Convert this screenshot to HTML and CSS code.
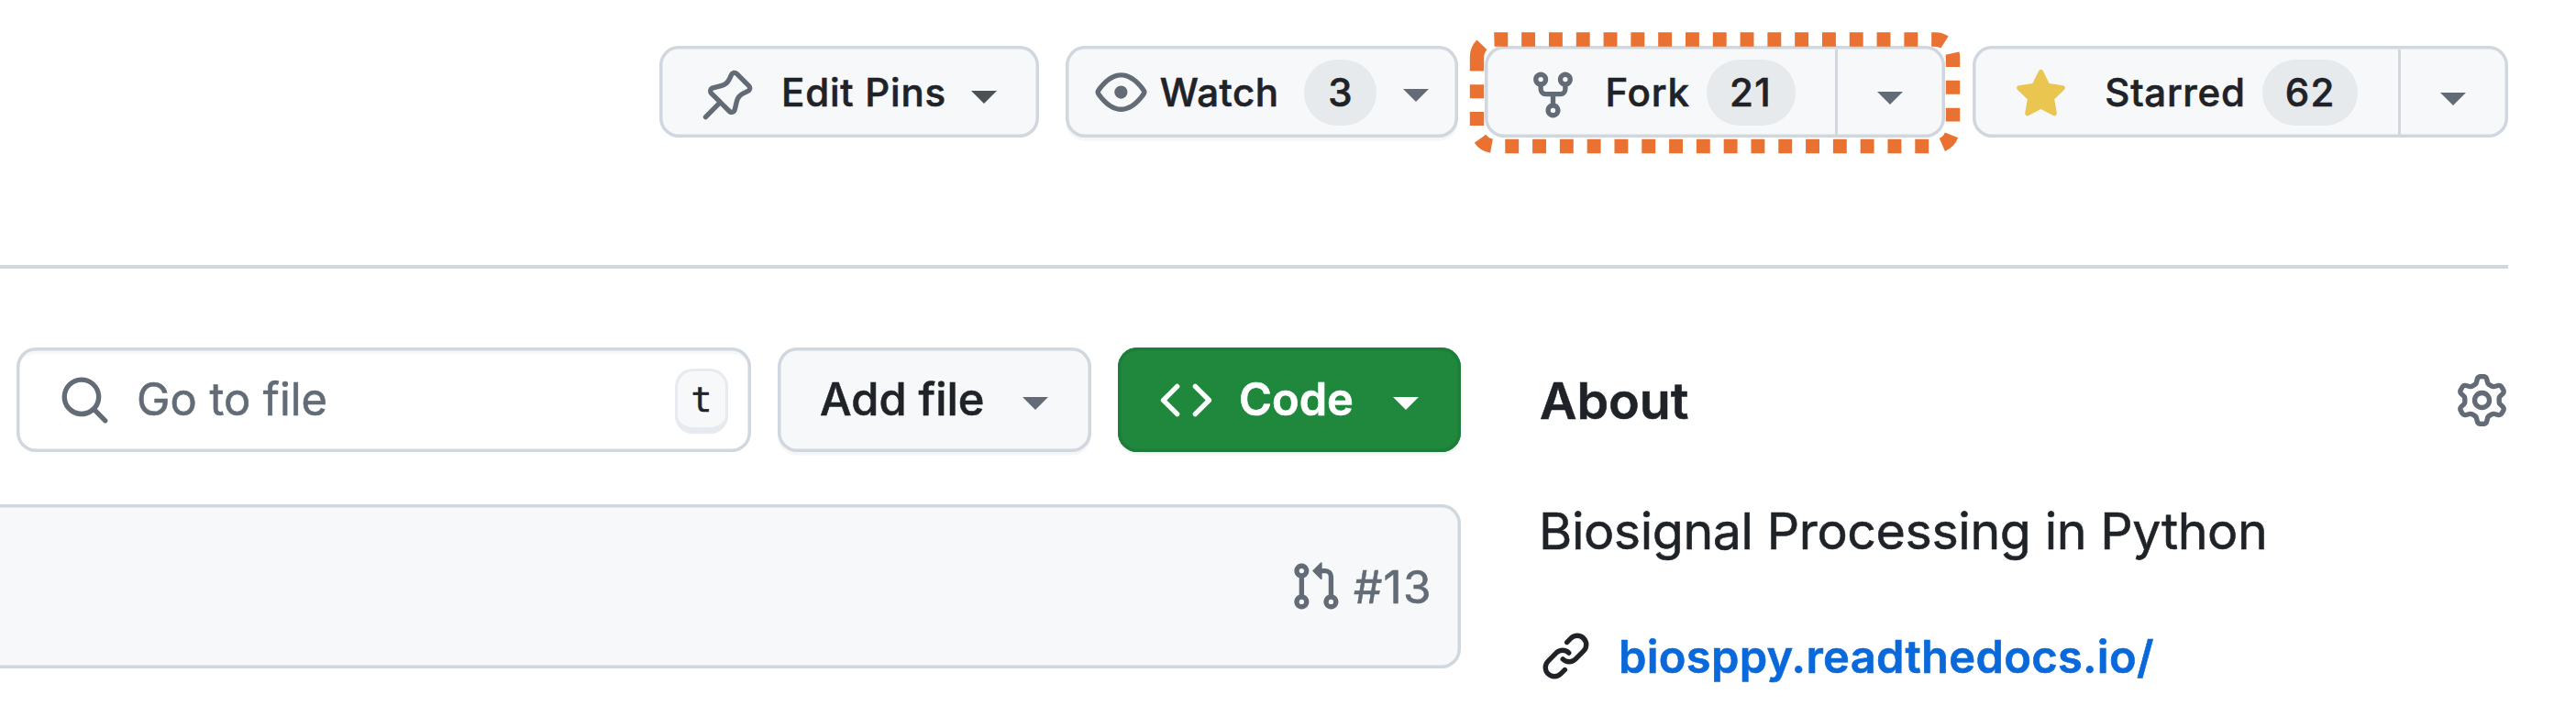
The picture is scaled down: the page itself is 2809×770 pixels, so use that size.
FILE: index.html
```html
<!DOCTYPE html>
<html lang="en">
<head>
<meta charset="utf-8">
<title>Biosignal Processing in Python</title>
<link rel="stylesheet" href="styles.css">
</head>
<body>
<header class="actions">
  <button class="btn pins">
    <svg class="icon low" viewBox="0 0 16 16"><path d="m11.294.984 3.722 3.722a1.75 1.75 0 0 1-.504 2.826l-1.327.613a3.089 3.089 0 0 0-1.707 2.084l-.584 2.454c-.317 1.332-1.972 1.8-2.94.832L5.75 11.311 1.78 15.28a.749.749 0 1 1-1.06-1.06l3.969-3.97-2.204-2.204c-.968-.968-.5-2.623.832-2.94l2.454-.584a3.08 3.08 0 0 0 2.084-1.707l.613-1.327a1.75 1.75 0 0 1 2.826-.504ZM6.283 9.723l2.732 2.731a.25.25 0 0 0 .42-.119l.584-2.454a4.586 4.586 0 0 1 2.537-3.098l1.328-.613a.25.25 0 0 0 .072-.404l-3.722-3.722a.25.25 0 0 0-.404.072l-.613 1.328a4.584 4.584 0 0 1-3.098 2.537l-2.454.584a.25.25 0 0 0-.119.42l2.731 2.732Z"/></svg>
    <span class="label">Edit Pins</span>
    <svg class="caret" viewBox="0 0 28 14"><path d="M0 0h28L14 14z"/></svg>
  </button>
  <button class="btn watch">
    <svg class="icon" viewBox="0 0 16 16"><path d="M8 2c1.981 0 3.671.992 4.933 2.078 1.27 1.091 2.187 2.345 2.637 3.023a1.62 1.62 0 0 1 0 1.798c-.45.678-1.367 1.932-2.637 3.023C11.67 13.008 9.981 14 8 14c-1.981 0-3.671-.992-4.933-2.078C1.797 10.83.88 9.576.43 8.898a1.62 1.62 0 0 1 0-1.798c.45-.677 1.367-1.931 2.637-3.022C4.33 2.992 6.019 2 8 2ZM1.679 7.932a.12.12 0 0 0 0 .136c.411.622 1.241 1.75 2.366 2.717C5.176 11.758 6.527 12.5 8 12.5c1.473 0 2.825-.742 3.955-1.715 1.124-.967 1.954-2.096 2.366-2.717a.12.12 0 0 0 0-.136c-.412-.621-1.242-1.75-2.366-2.717C10.824 4.242 9.473 3.5 8 3.5c-1.473 0-2.825.742-3.955 1.715-1.124.967-1.954 2.096-2.366 2.717ZM8 10a2 2 0 1 1-.001-3.999A2 2 0 0 1 8 10Z"/></svg>
    <span class="label">Watch</span>
    <span class="badge"><span class="label">3</span></span>
    <svg class="caret" viewBox="0 0 28 14"><path d="M0 0h28L14 14z"/></svg>
  </button>
  <div class="btn fork">
    <div class="main">
      <svg class="icon low" viewBox="0 0 16 16"><path d="M5 5.372v.878c0 .414.336.75.75.75h4.5a.75.75 0 0 0 .75-.75v-.878a2.25 2.25 0 1 1 1.5 0v.878a2.25 2.25 0 0 1-2.25 2.25h-1.5v2.128a2.251 2.251 0 1 1-1.5 0V8.5h-1.5A2.25 2.25 0 0 1 3.5 6.25v-.878a2.25 2.25 0 1 1 1.5 0ZM5 3.25a.75.75 0 1 0-1.5 0 .75.75 0 0 0 1.5 0Zm6.75.75a.75.75 0 1 0 0-1.5.75.75 0 0 0 0 1.5Zm-3 8.75a.75.75 0 1 0-1.5 0 .75.75 0 0 0 1.5 0Z"/></svg>
      <span class="label">Fork</span>
      <span class="badge"><span class="label digits">21</span></span>
    </div>
    <div class="more"><svg class="caret" viewBox="0 0 28 14"><path d="M0 0h28L14 14z"/></svg></div>
    <svg class="highlight" viewBox="0 0 536 133"><path pathLength="83" d="M8.5 27.5A19.5 19.5 0 0 1 28 8H508A19.5 19.5 0 0 1 527.5 27.5V105A19.5 19.5 0 0 1 508 124.5H28A19.5 19.5 0 0 1 8.5 105Z"/></svg>
  </div>
  <div class="btn star">
    <div class="main">
      <svg class="icon low" viewBox="0 0 16 16"><path d="M8 .25a.75.75 0 0 1 .673.418l1.882 3.815 4.21.612a.75.75 0 0 1 .416 1.279l-3.046 2.97.719 4.192a.751.751 0 0 1-1.088.791L8 12.347l-3.766 1.98a.75.75 0 0 1-1.088-.79l.72-4.194L.818 6.374a.75.75 0 0 1 .416-1.28l4.21-.611L7.327.668A.75.75 0 0 1 8 .25Z"/></svg>
      <span class="label">Starred</span>
      <span class="badge"><span class="label digits">62</span></span>
    </div>
    <div class="more"><svg class="caret" viewBox="0 0 28 14"><path d="M0 0h28L14 14z"/></svg></div>
  </div>
</header>
<main class="content">
  <section class="files">
    <div class="toolbar">
      <div class="search">
        <svg class="icon" viewBox="0 0 16 16"><path d="M10.68 11.74a6 6 0 0 1-7.922-8.982 6 6 0 0 1 8.982 7.922l3.04 3.04a.749.749 0 0 1-.326 1.275.749.749 0 0 1-.734-.215ZM11.5 7a4.499 4.499 0 1 0-8.997 0A4.499 4.499 0 0 0 11.5 7Z"/></svg>
        <span class="placeholder">Go to file</span>
        <kbd class="key">t</kbd>
      </div>
      <button class="btn add">
        <span>Add file</span>
        <svg class="caret" viewBox="0 0 28 14"><path d="M0 0h28L14 14z"/></svg>
      </button>
      <button class="btn code">
        <svg class="icon" viewBox="0 0 16 16"><path d="m11.28 3.22 4.25 4.25a.75.75 0 0 1 0 1.06l-4.25 4.25a.749.749 0 0 1-1.275-.326.749.749 0 0 1 .215-.734L13.94 8l-3.72-3.72a.749.749 0 0 1 .326-1.275.749.749 0 0 1 .734.215Zm-6.56 0a.751.751 0 0 1 1.042.018.751.751 0 0 1 .018 1.042L2.06 8l3.72 3.72a.749.749 0 0 1-.326 1.275.749.749 0 0 1-.734-.215L.47 8.53a.75.75 0 0 1 0-1.06Z"/></svg>
        <span>Code</span>
        <svg class="caret" viewBox="0 0 28 14"><path d="M0 0h28L14 14z"/></svg>
      </button>
    </div>
    <div class="commit">
      <svg class="icon" viewBox="0 0 16 16"><path d="M1.5 3.25a2.25 2.25 0 1 1 3 2.122v5.256a2.251 2.251 0 1 1-1.5 0V5.372A2.25 2.25 0 0 1 1.5 3.25Zm5.677-.177L9.573.677A.25.25 0 0 1 10 .854V2.5h1A2.5 2.5 0 0 1 13.5 5v5.628a2.251 2.251 0 1 1-1.5 0V5a1 1 0 0 0-1-1h-1v1.646a.25.25 0 0 1-.427.177L7.177 3.427a.25.25 0 0 1 0-.354ZM3.75 2.5a.75.75 0 1 0 0 1.5.75.75 0 0 0 0-1.5Zm0 9.5a.75.75 0 1 0 0 1.5.75.75 0 0 0 0-1.5Zm8.25.75a.75.75 0 1 0 1.5 0 .75.75 0 0 0-1.5 0Z"/></svg>
      <span class="pr">#13</span>
    </div>
  </section>
  <aside class="about">
    <div class="about-head">
      <h2>About</h2>
      <svg class="icon" viewBox="0 0 16 16"><path d="M8 0a8.2 8.2 0 0 1 .701.031C9.444.095 9.99.645 10.16 1.29l.288 1.107c.018.066.079.158.212.224.231.114.454.243.668.386.123.082.233.09.299.071l1.103-.303c.644-.176 1.392.021 1.82.63.27.385.506.792.704 1.218.315.675.111 1.422-.364 1.891l-.814.806c-.049.048-.098.147-.088.294.016.257.016.515 0 .772-.01.147.038.246.088.294l.814.806c.475.469.679 1.216.364 1.891a7.977 7.977 0 0 1-.704 1.217c-.428.61-1.176.807-1.82.63l-1.102-.302c-.067-.019-.177-.011-.3.071a5.909 5.909 0 0 1-.668.386c-.133.066-.194.158-.211.224l-.29 1.106c-.168.646-.715 1.196-1.458 1.26a8.006 8.006 0 0 1-1.402 0c-.743-.064-1.289-.614-1.458-1.26l-.289-1.106c-.018-.066-.079-.158-.212-.224a5.738 5.738 0 0 1-.668-.386c-.123-.082-.233-.09-.299-.071l-1.103.303c-.644.176-1.392-.021-1.82-.63a8.12 8.12 0 0 1-.704-1.218c-.315-.675-.111-1.422.363-1.891l.815-.806c.05-.048.098-.147.088-.294a6.214 6.214 0 0 1 0-.772c.01-.147-.038-.246-.088-.294l-.815-.806C.635 6.045.431 5.298.746 4.623a7.92 7.92 0 0 1 .704-1.217c.428-.61 1.176-.807 1.82-.63l1.102.302c.067.019.177.011.3-.071.214-.143.437-.272.668-.386.133-.066.194-.158.211-.224l.29-1.106C6.009.645 6.556.095 7.299.03 7.53.01 7.764 0 8 0Zm-.571 1.525c-.036.003-.108.036-.137.146l-.289 1.105c-.147.561-.549.967-.998 1.189-.173.086-.34.183-.5.29-.417.278-.97.423-1.529.27l-1.103-.303c-.109-.03-.175.016-.195.045-.22.312-.412.644-.573.99-.014.031-.021.11.059.19l.815.806c.411.406.562.957.53 1.456a4.709 4.709 0 0 0 0 .582c.032.499-.119 1.05-.53 1.456l-.815.806c-.081.08-.073.159-.059.19.162.346.353.677.573.989.02.03.085.076.195.046l1.102-.303c.56-.153 1.113-.008 1.53.27.161.107.328.204.501.29.447.222.85.629.997 1.189l.289 1.105c.029.109.101.143.137.146a6.6 6.6 0 0 0 1.142 0c.036-.003.108-.036.137-.146l.289-1.105c.147-.561.549-.967.998-1.189.173-.086.34-.183.5-.29.417-.278.97-.423 1.529-.27l1.103.303c.109.029.175-.016.195-.045.22-.313.411-.644.573-.99.014-.031.021-.11-.059-.19l-.815-.806c-.411-.406-.562-.957-.53-1.456a4.709 4.709 0 0 0 0-.582c-.032-.499.119-1.05.53-1.456l.815-.806c.081-.08.073-.159.059-.19a6.464 6.464 0 0 0-.573-.989c-.02-.03-.085-.076-.195-.046l-1.102.303c-.56.153-1.113.008-1.53-.27a4.44 4.44 0 0 0-.501-.29c-.447-.222-.85-.629-.997-1.189l-.289-1.105c-.029-.11-.101-.143-.137-.146a6.6 6.6 0 0 0-1.142 0ZM11 8a3 3 0 1 1-6 0 3 3 0 0 1 6 0ZM9.5 8a1.5 1.5 0 1 0-3.001.001A1.5 1.5 0 0 0 9.5 8Z"/></svg>
    </div>
    <p class="description">Biosignal Processing in Python</p>
    <div class="website">
      <svg class="icon" viewBox="0 0 16 16"><path d="m7.775 3.275 1.25-1.25a3.5 3.5 0 1 1 4.95 4.95l-2.5 2.5a3.5 3.5 0 0 1-4.95 0 .751.751 0 0 1 .018-1.042.751.751 0 0 1 1.042-.018 1.998 1.998 0 0 0 2.83 0l2.5-2.5a2.002 2.002 0 0 0-2.83-2.83l-1.25 1.25a.751.751 0 0 1-1.042-.018.751.751 0 0 1-.018-1.042Zm-4.69 9.64a1.998 1.998 0 0 0 2.83 0l1.25-1.25a.751.751 0 0 1 1.042.018.751.751 0 0 1 .018 1.042l-1.25 1.25a3.5 3.5 0 1 1-4.95-4.95l2.5-2.5a3.5 3.5 0 0 1 4.95 0 .751.751 0 0 1-.018 1.042.751.751 0 0 1-1.042.018 1.998 1.998 0 0 0-2.83 0l-2.5 2.5a1.998 1.998 0 0 0 0 2.83Z"/></svg>
      <a href="#">biosppy.readthedocs.io/</a>
    </div>
  </aside>
</main>
</body>
</html>
```
FILE: styles.css
```css
* { box-sizing: border-box; }

body {
  margin: 0;
  height: 770px;
  overflow: hidden;
  background: #fff;
  color: #1f2328;
  font-family: Inter, "Liberation Sans", sans-serif;
  -webkit-text-stroke: .6px currentColor;
}

.icon {
  flex: none;
  width: 57px;
  height: 57px;
  fill: #636c76;
}
.icon.low { margin-top: 7px; }

.caret {
  flex: none;
  width: 28px;
  height: 14px;
  fill: #636c76;
}

.btn {
  display: flex;
  align-items: center;
  padding: 0;
  border: 0;
  border-radius: 21px;
  background: #f6f8fa;
  box-shadow: inset 0 0 0 3.5px #d0d7de;
  color: inherit;
  font: 500 42px/1 Inter, "Liberation Sans", sans-serif;
  white-space: nowrap;
}

/* Repository actions */
.actions {
  display: flex;
  width: 2735px;
  height: 293px;
  padding: 50px 0 0 719px;
  border-bottom: 4px solid #d0d7de;
}
.actions .btn { height: 100px; }
.actions .label { margin-top: 2px; }

.badge {
  display: flex;
  align-items: center;
  justify-content: center;
  height: 72px;
  margin-top: 1px;
  border-radius: 36px;
  background: #e6eaed;
}
.badge .label { margin-top: 1px; }
.badge .digits { letter-spacing: 1.5px; }

.pins { width: 414px; padding-left: 46px; }
.pins .label { width: 207px; margin-left: 30px; text-align: left; letter-spacing: .8px; }
.pins .caret { margin-top: 11px; fill: #4c5156; }

.watch {
  width: 428px;
  margin-left: 29px;
  padding-left: 32px;
  box-shadow: inset 0 0 0 3.5px #d0d7de, 0 3.5px 0 rgba(31, 35, 40, .04);
}
.watch > .label { width: 157px; margin-left: 14px; text-align: left; letter-spacing: .5px; }
.watch .badge { width: 79px; }
.watch .caret { margin: 8px 0 0 29px; }

.main { display: flex; align-items: center; height: 100%; }
.more {
  display: flex;
  align-items: center;
  height: 93px;
  border-left: 3px solid #d0d7de;
}

.fork { position: relative; width: 503px; margin-left: 29px; }
.fork .main { width: 382px; padding-left: 46px; }
.fork .main > .label { width: 110px; margin-left: 29px; letter-spacing: .8px; }
.fork .badge { width: 97px; }
.fork .more { padding-left: 43px; }
.fork .caret { margin-top: 14px; }

/* Dashed callout around the fork button */
.highlight {
  position: absolute;
  left: -17px;
  top: -15px;
  width: 536px;
  height: 133px;
  fill: none;
  stroke: #e97132;
  stroke-width: 15.4;
  stroke-dasharray: 1 1;
}

.star { width: 584px; margin-left: 30px; }
.star .main { width: 464px; padding-left: 46px; }
.star .icon { fill: #eac54f; }
.star .main > .label { width: 172px; margin-left: 41px; letter-spacing: .7px; }
.star .badge { width: 104px; }
.star .more { padding-left: 43px; }
.star .caret { margin-top: 15px; }

/* File list and sidebar */
.content { display: flex; gap: 86px; }
.files { width: 1593px; padding-top: 86px; }

.toolbar { display: flex; height: 114px; padding-left: 18px; gap: 29px; }
.toolbar .btn { height: 114px; font-size: 48.8px; }
.toolbar .caret { margin-top: 7px; }

.search {
  display: flex;
  align-items: center;
  width: 801px;
  padding-left: 46px;
  border-radius: 21px;
  box-shadow: inset 0 0 0 3.5px #d0d7de, inset 0 7px 0 rgba(208, 215, 222, .2);
}
.placeholder {
  width: 587px;
  margin-left: 28px;
  color: #636c76;
  font-size: 48.8px;
  line-height: 1;
}
.key {
  display: flex;
  flex: none;
  align-items: center;
  justify-content: center;
  width: 58px;
  height: 71px;
  margin-top: 3px;
  padding-bottom: 4px;
  border-radius: 20px;
  background: #f6f8fa;
  box-shadow: inset 0 0 0 3px #e7eaee, inset 0 -7px 0 #e7eaee;
  font: 38px/1 "DejaVu Sans Mono", monospace;
}

.add {
  width: 342px;
  padding-left: 46px;
  box-shadow: inset 0 0 0 3.5px #d0d7de, 0 3.5px 0 rgba(31, 35, 40, .04);
}
.add .caret { margin-left: 42px; }

.toolbar .code {
  width: 374px;
  padding-left: 46px;
  background: #1f883d;
  box-shadow: inset 0 0 0 3.5px #1d7d3a, 0 3.5px 0 rgba(31, 35, 40, .04);
  color: #fff;
  font-weight: 600;
}
.code span { width: 168px; margin-left: 29px; text-align: left; }
.code .icon, .code .caret { fill: #fff; }

.commit {
  display: flex;
  align-items: center;
  justify-content: flex-end;
  height: 179px;
  margin: 57px 0 0 -30px;
  padding-right: 29px;
  border-radius: 21px;
  background: #f6f8fa;
  box-shadow: inset 0 0 0 3.5px #d0d7de;
}
.pr {
  width: 88px;
  margin: 2px 0 0 13px;
  color: #636c76;
  font-size: 49.5px;
  line-height: 1;
  letter-spacing: 1.2px;
}

.about { width: 1056px; padding-top: 112px; }
.about-head { display: flex; align-items: center; justify-content: space-between; height: 62px; }
.about h2 { margin: 1px 0 0; font-size: 55.5px; font-weight: 600; line-height: 1; }
.description {
  margin: 72px 0 0 -1px;
  font-size: 55.5px;
  line-height: 80px;
  letter-spacing: -.4px;
}
.website { display: flex; align-items: center; margin-top: 65px; }
.website .icon { fill: #1f2328; }
.website a {
  margin: 3px 0 0 29px;
  color: #0969da;
  font-size: 48.8px;
  font-weight: 600;
  line-height: 60px;
  letter-spacing: .3px;
  text-decoration: none;
}
```
